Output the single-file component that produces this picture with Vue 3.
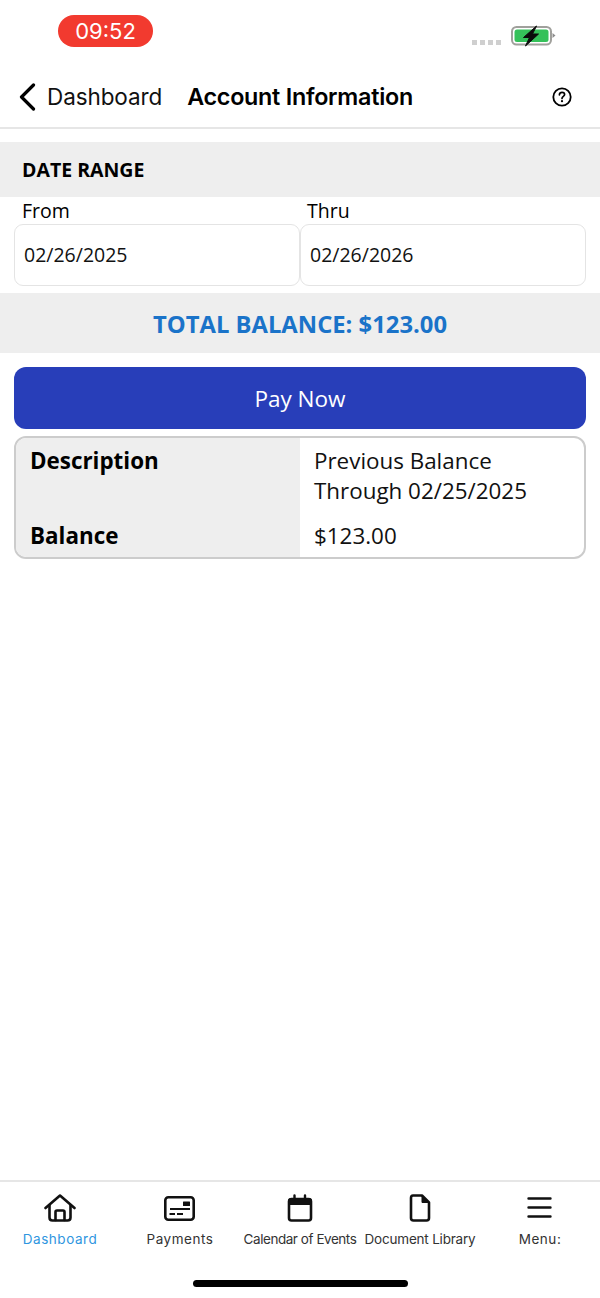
<script setup>
const tabs = [
  { key: 'home', label: 'Dashboard', active: true },
  { key: 'card', label: 'Payments' },
  { key: 'cal', label: 'Calendar of Events' },
  { key: 'doc', label: 'Document Library' },
  { key: 'menu', label: 'Menu:' }
]
</script>

<template>
  <div class="page">
    <div class="status">
      <div class="clock">09:52</div>
      <div class="status-right">
        <div class="dots"><i></i><i></i><i></i><i></i></div>
        <svg class="battery" width="46" height="22" viewBox="0 0 46 22">
          <rect x="2" y="2" width="39" height="17.500" rx="4.500" fill="none" stroke="#a0a09c" stroke-width="2" />
          <rect x="4.500" y="4.500" width="34" height="12.500" rx="2.500" fill="#35c15a" />
          <path d="M42.500 8 L45.500 10.500 L42.500 13Z" fill="#8d8d8d" />
          <path d="M26.500 1 L13.500 12.500 H19.500 L15.500 21 L28.500 9 H22.500Z" fill="#0b0b0b" stroke="#0b0b0b" stroke-width="1" stroke-linejoin="round" />
        </svg>
      </div>
    </div>

    <header class="nav">
      <svg class="chev" width="18" height="28" viewBox="0 0 18 28">
        <path d="M15.500 2 L3.500 14 L15.500 26" fill="none" stroke="#000" stroke-width="3.200" stroke-linecap="round" stroke-linejoin="round" />
      </svg>
      <span class="back">Dashboard</span>
      <span class="title">Account Information</span>
      <svg class="help" width="20" height="20" viewBox="0 0 20 20">
        <circle cx="10" cy="10" r="8.700" fill="none" stroke="#000" stroke-width="1.800" />
        <path d="M7.400 7.800 C7.400 6.200 8.600 5.300 10 5.300 C11.500 5.300 12.600 6.200 12.600 7.600 C12.600 9.400 10 9.400 10 11.400" fill="none" stroke="#000" stroke-width="1.700" stroke-linecap="round" />
        <circle cx="10" cy="14.200" r="1.100" fill="#000" />
      </svg>
    </header>

    <section class="band range">DATE RANGE</section>

    <div class="dates">
      <div class="field">
        <label>From</label>
        <div class="input">02/26/2025</div>
      </div>
      <div class="field">
        <label class="thru">Thru</label>
        <div class="input">02/26/2026</div>
      </div>
    </div>

    <section class="band total">TOTAL BALANCE: $123.00</section>

    <button class="pay">Pay Now</button>

    <div class="table">
      <div class="th first">Description</div>
      <div class="td first">Previous Balance<br />Through 02/25/2025</div>
      <div class="th">Balance</div>
      <div class="td">$123.00</div>
    </div>

    <div class="spacer"></div>

    <footer class="tabbar">
      <div class="tabs">
        <div v-for="t in tabs" :key="t.key" class="tab" :class="{ active: t.active }">
          <svg width="36" height="32" viewBox="0 0 36 32" fill="none" stroke="#111" stroke-width="2.600" stroke-linecap="round" stroke-linejoin="round">
            <template v-if="t.key === 'home'">
              <path d="M3.500 14 L18 1.500 L32.500 14" />
              <path d="M7.500 11 V23.500 Q7.500 26.500 10.500 26.500 H25.500 Q28.500 26.500 28.500 23.500 V11" />
              <path d="M13.500 26 V18 Q13.500 16.500 15 16.500 H21 Q22.500 16.500 22.500 18 V26" />
            </template>
            <template v-else-if="t.key === 'card'">
              <rect x="3.300" y="3.300" width="28.400" height="22.400" rx="3" />
              <path d="M8 15 H28" stroke-width="2" stroke-linecap="butt" />
              <path d="M7.500 20 H13 M15 20 H21" stroke-width="2" stroke-linecap="butt" />
              <rect x="21" y="7.500" width="7" height="4.500" rx=".5" fill="#111" stroke="none" />
            </template>
            <template v-else-if="t.key === 'cal'">
              <rect x="7" y="5" width="22" height="21.500" rx="2.500" />
              <path d="M7 10 H29 V6.500 Q29 5 27 5 H9 Q7 5 7 6.500Z" fill="#111" stroke-width="2" />
              <path d="M12.500 1.500 V5 M23 1.500 V5" stroke-width="2.400" />
            </template>
            <template v-else-if="t.key === 'doc'">
              <path d="M11 1.500 H20 L27 8.500 V24 Q27 26.500 24.500 26.500 H11.500 Q9 26.500 9 24 V4 Q9 1.500 11 1.500Z" />
              <path d="M20 2 V8.500 H26.500Z" fill="#111" stroke-width="1" />
            </template>
            <template v-else>
              <path d="M6.500 4.500 H28.500 M6.500 13.500 H28.500 M6.500 22.500 H28.500" stroke-width="2.400" />
            </template>
          </svg>
          <span>{{ t.label }}</span>
        </div>
      </div>
      <div class="home-bar"></div>
    </footer>
  </div>
</template>

<style>
html, body { margin: 0; background: #fff; }
</style>

<style scoped>
.page {
  width: 600px;
  min-height: 1298px;
  display: flex;
  flex-direction: column;
  background: #fff;
  font-family: "Open Sans", "Noto Sans", sans-serif;
  color: #000;
  box-sizing: border-box;
}
.status {
  height: 70px;
  box-sizing: border-box;
  padding: 15px 44px 0 58px;
  display: flex;
  justify-content: space-between;
  align-items: flex-start;
}
.clock {
  width: 95px;
  height: 32px;
  border-radius: 16px;
  background: #f23a2f;
  color: #fff;
  font: 400 22px/32px Inter, Roboto, sans-serif;
  text-align: center;
}
.status-right {
  display: flex;
  align-items: flex-end;
  gap: 9px;
  margin-top: 10px;
}
.dots { display: flex; gap: 3px; margin-bottom: 2px; }
.dots i { width: 5px; height: 5px; background: #cfcfcf; display: block; }
.nav {
  height: 59px;
  box-sizing: border-box;
  border-bottom: 2px solid #e6e6e6;
  display: flex;
  align-items: center;
  padding: 0 28px 4px 18px;
  font-family: Inter, Roboto, sans-serif;
}
.chev { margin-right: 11px; }
.back { font-size: 22.500px; font-weight: 400; color: #111; letter-spacing: -.1px; }
.title { font-size: 23.300px; font-weight: 600; margin-left: 25px; letter-spacing: -.25px; }
.help { margin-left: auto; }
.band { background: #eeeeee; }
.range {
  margin-top: 13px;
  height: 55px;
  line-height: 55px;
  padding-left: 22px;
  font-size: 19.500px;
  font-weight: 700;
}
.dates {
  display: flex;
  padding: 0 14px;
  margin-bottom: 7px;
}
.field { flex: 1; min-width: 0; }
.field label {
  display: block;
  height: 27px;
  line-height: 28px;
  padding-left: 8px;
  font-size: 19.500px;
}
.field label.thru { padding-left: 7px; }
.input {
  height: 62px;
  box-sizing: border-box;
  border: 1px solid #e4e4e4;
  border-radius: 9px;
  padding-left: 9px;
  line-height: 60px;
  font-size: 19.500px;
  color: #111;
}
.total {
  height: 60px;
  line-height: 62px;
  text-align: center;
  font-size: 23.800px;
  font-weight: 700;
  color: #1a73c9;
}
.pay {
  margin: 14px 14px 0;
  height: 62px;
  border: 0;
  border-radius: 12px;
  background: #283eb9;
  color: #fff;
  font: 400 22.500px "Open Sans", sans-serif;
}
.table {
  margin: 7px 14px 0;
  height: 123px;
  box-sizing: border-box;
  border: 2px solid #cccccc;
  border-radius: 12px;
  overflow: hidden;
  display: grid;
  grid-template-columns: 284px 1fr;
  grid-template-rows: 1fr auto;
  font-size: 22.400px;
}
.th {
  background: #eeeeee;
  padding-left: 14px;
  font-weight: 700;
  line-height: 30px;
  padding-bottom: 6px;
}
.td {
  padding-left: 14px;
  line-height: 30px;
  padding-bottom: 6px;
  color: #111;
}
.th.first, .td.first { padding-top: 8px; }
.spacer { flex: 1; }
.tabbar {
  height: 118px;
  box-sizing: border-box;
  border-top: 2px solid #e6e6e6;
  position: relative;
}
.tabs {
  display: grid;
  grid-template-columns: repeat(5, 120px);
  padding-top: 12px;
}
.tab {
  display: flex;
  flex-direction: column;
  align-items: center;
  white-space: nowrap;
  font: 400 13.500px/20px Inter, Roboto, sans-serif;
  letter-spacing: .55px;
  color: #333;
}
.tab span { margin-top: 3px; }
.tab.active span { color: #2f96e0; }
.tab:nth-child(3) { letter-spacing: -.45px; }
.tab:nth-child(4) { letter-spacing: -.2px; }
.home-bar {
  position: absolute;
  left: 193px;
  bottom: 11px;
  width: 215px;
  height: 7px;
  border-radius: 4px;
  background: #000;
}
</style>
